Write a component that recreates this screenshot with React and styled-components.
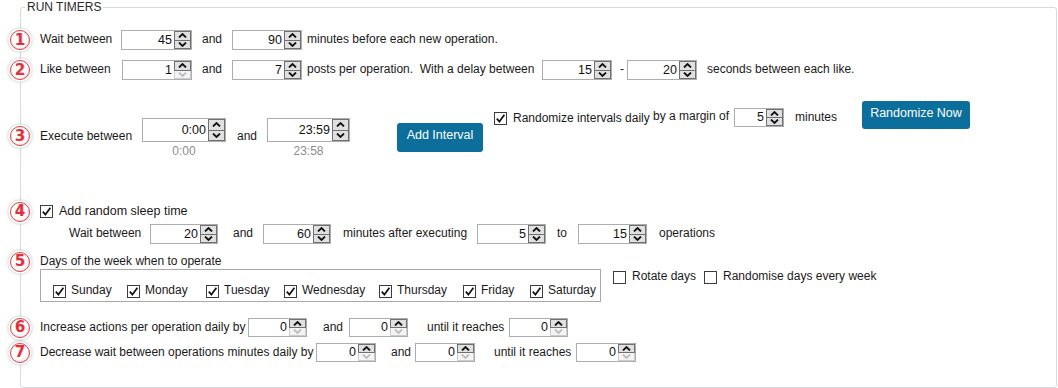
import React from 'react';
import styled, { createGlobalStyle } from 'styled-components';

const GlobalStyle = createGlobalStyle`
  html, body { margin: 0; padding: 0; background: #fff; }
  body {
    font-family: "Liberation Sans", Arial, sans-serif;
    font-size: 12px;
    color: #1a1a1a;
  }
  * { box-sizing: border-box; }
`;

const Group = styled.div`
  position: relative;
  margin: 7px 0 0 20px;
  width: 1037px;
  height: 381px;
  border: 1px solid #d3dbe0;
  border-radius: 3px;
  padding: 22px 0 0 19px;
`;

const Legend = styled.span`
  position: absolute;
  top: -8px;
  left: 4px;
  padding: 0 2px;
  background: #fff;
  line-height: 14px;
  font-size: 12px;
  color: #2a2a2a;
`;

const Row = styled.div`
  position: relative;
  display: flex;
  align-items: ${p => p.$align || 'center'};
  height: ${p => p.$h}px;
  margin-top: ${p => p.$mt || 0}px;
  margin-left: ${p => p.$ml || 0}px;
`;

const Section = styled.div`
  display: flex;
  flex-direction: column;
  margin-top: ${p => p.$mt || 0}px;
`;

const Badge = styled.span`
  position: absolute;
  left: -30px;
  top: ${p => (p.$top != null ? `${p.$top}px` : '50%')};
  margin-top: ${p => (p.$top != null ? 0 : -10)}px;
  width: 20px;
  height: 20px;
  border-radius: 50%;
  border: 1.5px solid #e43b45;
  background: radial-gradient(circle at 38% 35%, #ffffff 45%, #e2e2e2 100%);
  box-shadow: 0 0 0 1.5px #fff, 0 0 3px 2px rgba(140, 140, 140, 0.45);
  display: flex;
  align-items: center;
  justify-content: center;
  font-family: "DejaVu Sans", sans-serif;
  font-weight: bold;
  font-size: 15px;
  line-height: 1;
  color: #e2303b;
  text-shadow: 1px 0 0 rgba(150, 150, 150, 0.35);
`;

const Text = styled.span`
  flex: none;
  display: block;
  width: ${p => (p.$w ? `${p.$w}px` : 'auto')};
  margin-left: ${p => p.$ml || 0}px;
  margin-top: ${p => p.$mt || 0}px;
  padding-bottom: ${p => (p.$mt != null ? 0 : 2)}px;
  font-size: ${p => p.$size || 12}px;
  line-height: 16px;
  white-space: nowrap;
`;

const SpinBox = styled.div`
  flex: none;
  display: flex;
  width: ${p => p.$w}px;
  height: ${p => p.$h}px;
  margin-left: ${p => p.$ml || 0}px;
  margin-top: ${p => p.$mt || 0}px;
  border: 1px solid #abadb3;
  background: #fff;
`;

const SpinValue = styled.div`
  flex: 1;
  text-align: right;
  padding-right: 2px;
  font-size: 12.5px;
  line-height: ${p => p.$h - 2}px;
  color: #111;
`;

const SpinCol = styled.div`
  flex: none;
  width: 17px;
  display: flex;
  flex-direction: column;
`;

const SpinBtn = styled.div`
  flex: 1;
  display: flex;
  align-items: center;
  justify-content: center;
  background: ${p => (p.$off ? '#f4f4f4' : '#e0e0e0')};
  border: 1px solid ${p => (p.$off ? '#cdcdcd' : '#707070')};
  border-top: ${p => (p.$second ? 'none' : undefined)};
`;

const Sub = styled.div`
  text-align: center;
  margin-top: 1px;
  line-height: 16px;
  color: #8c8c8c;
`;

const Column = styled.div`
  flex: none;
  display: flex;
  flex-direction: column;
  margin-left: ${p => p.$ml || 0}px;
  margin-top: ${p => p.$mt || 0}px;
`;

const ActionButton = styled.button`
  flex: none;
  width: ${p => p.$w}px;
  height: ${p => p.$h}px;
  margin-left: ${p => p.$ml || 0}px;
  margin-top: ${p => p.$mt || 0}px;
  padding: 0 0 5px;
  border: none;
  border-radius: 3px;
  background: #0b6e9b;
  color: #fff;
  font-family: inherit;
  font-size: 12.5px;
`;

const CheckBox = styled.span`
  flex: none;
  width: 13px;
  height: 13px;
  margin-left: ${p => p.$ml || 0}px;
  margin-top: ${p => p.$mt || 0}px;
  border: 1px solid #3c3c3c;
  background: #fff;
  display: flex;
  align-items: center;
  justify-content: center;
`;

const CheckItem = styled.label`
  flex: none;
  display: flex;
  align-items: center;
  width: ${p => (p.$w ? `${p.$w}px` : 'auto')};
  height: 14px;
`;

const ItemLabel = styled.span`
  margin-left: ${p => p.$ml || 5}px;
  padding-bottom: 2px;
  line-height: 16px;
  white-space: nowrap;
`;

const DaysBox = styled.div`
  flex: none;
  display: flex;
  width: 561px;
  height: 33px;
  padding: 14px 0 0 12px;
  border: 1px solid #a9a9a9;
`;

const Options = styled.div`
  display: flex;
  margin: 1px 0 0 12px;
`;

function Arrow({ up, off }) {
  return (
    <svg width="9" height="5" viewBox="0 0 9 5">
      <path
        d={up ? 'M1 4.5 L4.5 1 L8 4.5' : 'M1 0.5 L4.5 4 L8 0.5'}
        fill="none"
        stroke={off ? '#bdbdbd' : '#111'}
        strokeWidth="1.8"
      />
    </svg>
  );
}

function Spinner({ value, w, h = 20, ml, mt, upOff, downOff }) {
  return (
    <SpinBox $w={w} $h={h} $ml={ml} $mt={mt}>
      <SpinValue $h={h}>{value}</SpinValue>
      <SpinCol>
        <SpinBtn $off={upOff}>
          <Arrow up off={upOff} />
        </SpinBtn>
        <SpinBtn $off={downOff} $second>
          <Arrow off={downOff} />
        </SpinBtn>
      </SpinCol>
    </SpinBox>
  );
}

function Check({ checked, ml, mt }) {
  return (
    <CheckBox $ml={ml} $mt={mt}>
      {checked && (
        <svg width="11" height="11" viewBox="0 0 11 11">
          <path d="M1.8 5.6 L4.4 8.6 L9.4 1.8" fill="none" stroke="#111" strokeWidth="1.7" />
        </svg>
      )}
    </CheckBox>
  );
}

function TimeField({ value, sub, w, ml, mt }) {
  return (
    <Column $ml={ml} $mt={mt}>
      <Spinner value={value} w={w} h={24} />
      <Sub>{sub}</Sub>
    </Column>
  );
}

const days = [
  ['Sunday', 74],
  ['Monday', 79],
  ['Tuesday', 78],
  ['Wednesday', 95],
  ['Thursday', 84],
  ['Friday', 67],
  ['Saturday', 0],
];

export default function App() {
  return (
    <>
      <GlobalStyle />
      <Group>
        <Legend>RUN TIMERS</Legend>

        <Row $h={20}>
          <Badge>1</Badge>
          <Text $w={81}>Wait between</Text>
          <Spinner value="45" w={71} />
          <Text $ml={10} $w={30}>and</Text>
          <Spinner value="90" w={70} />
          <Text $ml={5}>minutes before each new operation.</Text>
        </Row>

        <Row $h={20} $mt={10}>
          <Badge>2</Badge>
          <Text $w={82}>Like between</Text>
          <Spinner value="1" w={70} downOff />
          <Text $ml={10} $w={30}>and</Text>
          <Spinner value="7" w={70} />
          <Text $ml={5} $w={235}>posts per operation.&nbsp; With a delay between</Text>
          <Spinner value="15" w={70} />
          <Text $ml={8} $w={7}>-</Text>
          <Spinner value="20" w={70} />
          <Text $ml={10}>seconds between each like.</Text>
        </Row>

        <Row $h={60} $mt={20} $align="flex-start">
          <Badge $top={26}>3</Badge>
          <Text $w={102} $mt={28}>Execute between</Text>
          <TimeField value="0:00" sub="0:00" w={84} mt={18} />
          <Text $ml={11} $w={30} $mt={28}>and</Text>
          <TimeField value="23:59" sub="23:58" w={83} mt={18} />
          <ActionButton $w={86} $h={29} $ml={47} $mt={23}>Add Interval</ActionButton>
          <Check checked ml={11} mt={12} />
          <Text $ml={6} $w={140} $mt={10}>Randomize intervals daily</Text>
          <Text $w={81} $mt={8}>by a margin of</Text>
          <Spinner value="5" w={50} h={19} mt={8} />
          <Text $ml={11} $w={67} $mt={9}>minutes</Text>
          <ActionButton $w={108} $h={28} $mt={1}>Randomize Now</ActionButton>
        </Row>

        <Row $h={17} $mt={43}>
          <Badge>4</Badge>
          <Check checked />
          <Text $ml={6} $size={12.5}>Add random sleep time</Text>
        </Row>

        <Row $h={20} $mt={4} $ml={29}>
          <Text $w={81}>Wait between</Text>
          <Spinner value="20" w={68} />
          <Text $ml={15} $w={30}>and</Text>
          <Spinner value="60" w={68} />
          <Text $ml={12} $w={134}>minutes after executing</Text>
          <Spinner value="5" w={69} />
          <Text $ml={11} $w={21}>to</Text>
          <Spinner value="15" w={69} />
          <Text $ml={12}>operations</Text>
        </Row>

        <Section $mt={10}>
          <Row $h={15}>
            <Badge>5</Badge>
            <Text>Days of the week when to operate</Text>
          </Row>
          <Row $h={33} $align="flex-start">
            <DaysBox>
              {days.map(([d, w]) => (
                <CheckItem key={d} $w={w || undefined}>
                  <Check checked />
                  <ItemLabel>{d}</ItemLabel>
                </CheckItem>
              ))}
            </DaysBox>
            <Options>
              <CheckItem $w={91}>
                <Check />
                <ItemLabel $ml={6}>Rotate days</ItemLabel>
              </CheckItem>
              <CheckItem>
                <Check />
                <ItemLabel $ml={6}>Randomise days every week</ItemLabel>
              </CheckItem>
            </Options>
          </Row>
        </Section>

        <Row $h={19} $mt={16}>
          <Badge>6</Badge>
          <Text $w={208}>Increase actions per operation daily by</Text>
          <Spinner value="0" w={59} h={19} downOff />
          <Text $ml={16} $w={26}>and</Text>
          <Spinner value="0" w={59} h={19} downOff />
          <Text $ml={19} $w={82}>until it reaches</Text>
          <Spinner value="0" w={59} h={19} downOff />
        </Row>

        <Row $h={19} $mt={6}>
          <Badge>7</Badge>
          <Text $w={276}>Decrease wait between operations minutes daily by</Text>
          <Spinner value="0" w={60} h={19} downOff />
          <Text $ml={15} $w={24}>and</Text>
          <Spinner value="0" w={60} h={19} downOff />
          <Text $ml={19} $w={82}>until it reaches</Text>
          <Spinner value="0" w={60} h={19} downOff />
        </Row>
      </Group>
    </>
  );
}
